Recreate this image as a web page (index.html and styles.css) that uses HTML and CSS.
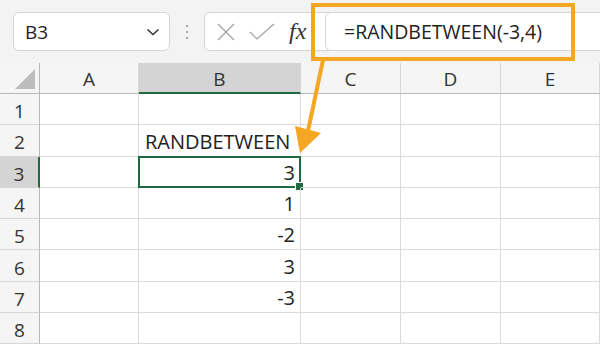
FILE: index.html
```html
<html>
    <head>
        <meta charset="UTF-8">
        <title>RANDBETWEEN</title>
        <link rel="stylesheet" href="styles.css">
    </head>
    <body>
        <div class="toolbar">
            <div class="name-box">
                <span>B3</span>
                <svg class="chevron" width="14" height="8" viewBox="0 0 14 8">
                    <path d="M1.5 1.5 L7 6.5 L12.5 1.5" fill="none" stroke="#333" stroke-width="1.6"/>
                </svg>
            </div>
            <div class="dots"><i></i><i></i><i></i></div>
            <div class="fx-box">
                <svg class="icon" width="20" height="20" viewBox="0 0 20 20">
                    <path d="M2 2 L18 18 M18 2 L2 18" stroke="#a0a0a0" stroke-width="1.2"/>
                </svg>
                <svg class="icon check" width="26" height="18" viewBox="0 0 26 18">
                    <path d="M1 9 L8 16 L25 1" fill="none" stroke="#a0a0a0" stroke-width="1.2"/>
                </svg>
                <span class="fx">fx</span>
            </div>
            <div class="formula">=RANDBETWEEN(-3,4)</div>
        </div>

        <div class="sheet">
            <div class="corner"><span class="tri"></span></div>
            <div class="col-head">A</div>
            <div class="col-head active">B</div>
            <div class="col-head">C</div>
            <div class="col-head">D</div>
            <div class="col-head">E</div>

            <div class="row-head">1</div>
            <div class="cell"></div><div class="cell"></div><div class="cell"></div><div class="cell"></div><div class="cell"></div>

            <div class="row-head">2</div>
            <div class="cell"></div><div class="cell text">RANDBETWEEN</div><div class="cell"></div><div class="cell"></div><div class="cell"></div>

            <div class="row-head active">3</div>
            <div class="cell"></div><div class="cell num selected">3<span class="handle"></span></div><div class="cell"></div><div class="cell"></div><div class="cell"></div>

            <div class="row-head">4</div>
            <div class="cell"></div><div class="cell num">1</div><div class="cell"></div><div class="cell"></div><div class="cell"></div>

            <div class="row-head">5</div>
            <div class="cell"></div><div class="cell num">-2</div><div class="cell"></div><div class="cell"></div><div class="cell"></div>

            <div class="row-head">6</div>
            <div class="cell"></div><div class="cell num">3</div><div class="cell"></div><div class="cell"></div><div class="cell"></div>

            <div class="row-head">7</div>
            <div class="cell"></div><div class="cell num">-3</div><div class="cell"></div><div class="cell"></div><div class="cell"></div>

            <div class="row-head">8</div>
            <div class="cell"></div><div class="cell"></div><div class="cell"></div><div class="cell"></div><div class="cell"></div>
        </div>

        <!-- callout over the formula bar -->
        <div class="callout"></div>
        <svg class="arrow" width="600" height="344" viewBox="0 0 600 344">
            <line x1="323" y1="60" x2="308" y2="131" stroke="#f5a623" stroke-width="4"/>
            <polygon points="300,153 295,126 321,133" fill="#f5a623"/>
        </svg>
    </body>
</html>
```

FILE: styles.css
```css
body {
    margin: 0;
    width: 600px;
    height: 344px;
    overflow: hidden;
    position: relative;
    font-family: 'Open Sans', 'Noto Sans', sans-serif;
    color: #222;
    background: #fff;
}

.toolbar {
    height: 63px;
    background: #f3f3f3;
    display: flex;
    align-items: center;
    padding-left: 13px;
    box-sizing: border-box;
}

.name-box {
    width: 157px;
    height: 39px;
    box-sizing: border-box;
    background: #fff;
    border: 1px solid #d4d4d4;
    border-radius: 6px;
    display: flex;
    align-items: center;
    justify-content: space-between;
    padding: 0 9px 0 11px;
    font-size: 19px;
}

.dots {
    width: 34px;
    display: flex;
    flex-direction: column;
    align-items: center;
    gap: 4px;
}

.dots i {
    width: 2px;
    height: 2px;
    background: #888;
    border-radius: 50%;
}

.fx-box {
    width: 130px;
    height: 39px;
    box-sizing: border-box;
    background: #fff;
    border: 1px solid #d4d4d4;
    border-radius: 6px;
    display: flex;
    align-items: center;
    padding-left: 11px;
}

.check {
    margin-left: 13px;
}

.fx {
    margin-left: 14px;
    font-family: 'Liberation Serif', serif;
    font-style: italic;
    font-size: 24px;
    color: #333;
}

.formula {
    flex: 1;
    height: 39px;
    margin-left: -9px;
    margin-right: -10px;
    background: #fff;
    border: 1px solid #d4d4d4;
    border-radius: 6px;
    box-sizing: border-box;
    display: flex;
    align-items: center;
    padding-left: 18px;
    font-size: 19.5px;
}

.sheet {
    display: grid;
    grid-template-columns: 40px 99px 162px 100px 100px 99px;
    grid-template-rows: 31px repeat(8, 31.3px);
}

.corner,
.col-head,
.row-head {
    background: #f5f5f5;
    color: #333;
    font-size: 19px;
    display: flex;
    align-items: center;
    justify-content: center;
    box-sizing: border-box;
    border-right: 1px solid #d6d6d6;
    border-bottom: 1px solid #d6d6d6;
}

.corner {
    border-right: 1px solid #b8b8b8;
    border-bottom: 1px solid #b8b8b8;
    align-items: flex-end;
    justify-content: flex-end;
    padding: 0 4px 4px 0;
}

.tri {
    width: 0;
    height: 0;
    border-left: 20px solid transparent;
    border-bottom: 20px solid #bcbcbc;
}

.col-head {
    padding-top: 2px;
    border-bottom-color: #b8b8b8;
}

.row-head {
    border-right-color: #b8b8b8;
    padding-top: 4px;
}

.col-head.active {
    background: #d4d4d4;
    border-bottom: 2px solid #1e6b41;
}

.row-head.active {
    background: #d4d4d4;
    border-right: 2px solid #1e6b41;
}

.cell {
    box-sizing: border-box;
    border-right: 1px solid #dadada;
    border-bottom: 1px solid #dadada;
    font-size: 20px;
    display: flex;
    align-items: flex-end;
    padding: 0 5px 1px 6px;
    position: relative;
}

.cell.num {
    justify-content: flex-end;
}

.cell.selected {
    border: 2px solid #1e6b41;
    margin: -1px 0 0 -1px;
    padding-bottom: 0;
    padding-right: 4px;
}

.handle {
    position: absolute;
    right: -5px;
    bottom: -5px;
    width: 7px;
    height: 7px;
    background: #1e6b41;
    border: 1px solid #fff;
}

.callout {
    position: absolute;
    left: 311px;
    top: 3px;
    width: 264px;
    height: 58px;
    box-sizing: border-box;
    border: 4px solid #f5a623;
}

.arrow {
    position: absolute;
    left: 0;
    top: 0;
}
```
